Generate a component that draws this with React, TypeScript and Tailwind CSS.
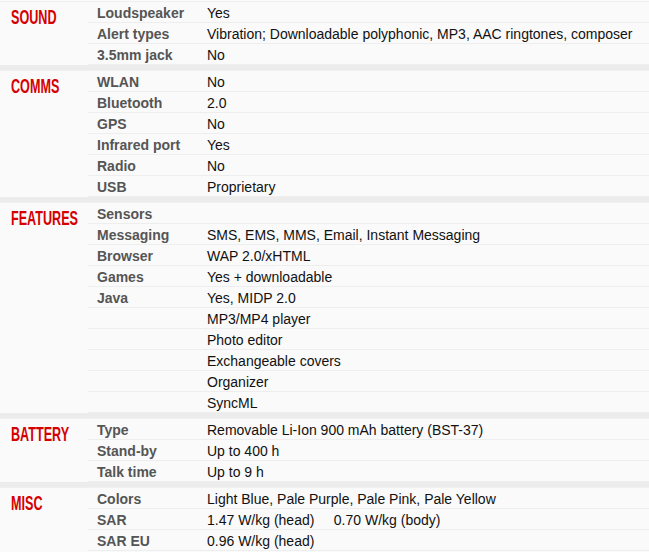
type Row = [string, string]

const sections: { title: string; rows: Row[] }[] = [
  {
    title: "SOUND",
    rows: [
      ["Loudspeaker", "Yes"],
      ["Alert types", "Vibration; Downloadable polyphonic, MP3, AAC ringtones, composer"],
      ["3.5mm jack", "No"],
    ],
  },
  {
    title: "COMMS",
    rows: [
      ["WLAN", "No"],
      ["Bluetooth", "2.0"],
      ["GPS", "No"],
      ["Infrared port", "Yes"],
      ["Radio", "No"],
      ["USB", "Proprietary"],
    ],
  },
  {
    title: "FEATURES",
    rows: [
      ["Sensors", ""],
      ["Messaging", "SMS, EMS, MMS, Email, Instant Messaging"],
      ["Browser", "WAP 2.0/xHTML"],
      ["Games", "Yes + downloadable"],
      ["Java", "Yes, MIDP 2.0"],
      ["", "MP3/MP4 player"],
      ["", "Photo editor"],
      ["", "Exchangeable covers"],
      ["", "Organizer"],
      ["", "SyncML"],
    ],
  },
  {
    title: "BATTERY",
    rows: [
      ["Type", "Removable Li-Ion 900 mAh battery (BST-37)"],
      ["Stand-by", "Up to 400 h"],
      ["Talk time", "Up to 9 h"],
    ],
  },
  {
    title: "MISC",
    rows: [
      ["Colors", "Light Blue, Pale Purple, Pale Pink, Pale Yellow"],
      ["SAR", "1.47 W/kg (head)     0.70 W/kg (body)"],
      ["SAR EU", "0.96 W/kg (head)"],
    ],
  },
]

export default function App() {
  return (
    <div className="w-[649px] h-[552px] overflow-hidden bg-[#fafafa] pt-px font-['Liberation_Sans',Arial,sans-serif]">
      {sections.map((s, i) => (
        <div
          key={s.title}
          className={`flex border-t border-[#f0f0f0] ${i > 0 ? "mt-[5px] shadow-[0_-5px_0_#ececec]" : ""}`}
        >
          {/* section title */}
          <div className="w-[88px] shrink-0 pl-[11px] pt-[3px]">
            <span className="inline-block origin-left scale-x-[0.63] text-[20px] font-bold leading-[24px] text-[#d50000] whitespace-nowrap">
              {s.title}
            </span>
          </div>

          {/* spec rows */}
          <div className="flex-1">
            {s.rows.map(([label, value], j) => (
              <div key={j} className="flex h-[21px] pt-[2px] border-b border-[#eeeeee] text-[14px] leading-[18px]">
                <div className="w-[119px] shrink-0 pl-[9px] font-bold text-[#555]">{label}</div>
                <div className="text-[#111] whitespace-pre">{value}</div>
              </div>
            ))}
          </div>
        </div>
      ))}
    </div>
  )
}
